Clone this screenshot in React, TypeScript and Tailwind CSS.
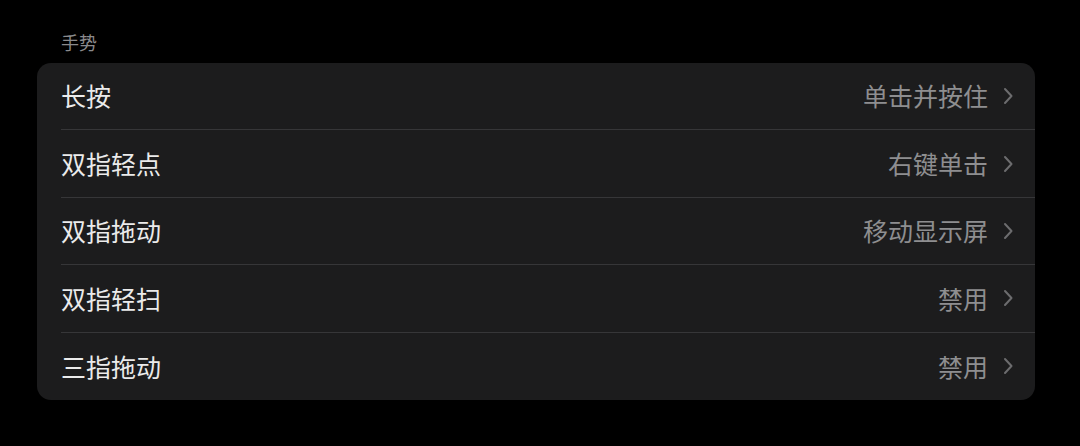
const rows = [
  { label: "长按", value: "单击并按住" },
  { label: "双指轻点", value: "右键单击" },
  { label: "双指拖动", value: "移动显示屏" },
  { label: "双指轻扫", value: "禁用" },
  { label: "三指拖动", value: "禁用" },
];

const Chevron = () => (
  <svg width="10" height="18" viewBox="0 0 10 18" fill="none">
    <polyline
      points="2,2 8.5,9 2,16"
      stroke="#6c6c6e"
      strokeWidth="2"
      strokeLinecap="round"
      strokeLinejoin="round"
    />
  </svg>
);

export default function App() {
  return (
    <div
      className="w-[1080px] h-[446px] bg-black pl-[37px] pr-[45px] pt-[29px]"
      style={{ fontFamily: '"Noto Sans CJK SC", "Noto Sans", sans-serif' }}
    >
      <div className="pl-[24px] text-[18px] leading-[26px] text-[#8a8a8c] h-[34px]">
        手势
      </div>
      <div className="bg-[#1c1c1d] rounded-[14px] overflow-hidden">
        {rows.map((r, i) => (
          <div key={i} className="pl-[24px]">
            <div
              className={
                "h-[67.4px] flex items-center pr-[22px] " +
                (i < rows.length - 1 ? "border-b border-[#363638]" : "")
              }
            >
              <span className="text-[25px] text-[#ebebeb] flex-1">{r.label}</span>
              <span className="text-[25px] text-[#8e8e90] mr-[15px]">{r.value}</span>
              <Chevron />
            </div>
          </div>
        ))}
      </div>
    </div>
  );
}
